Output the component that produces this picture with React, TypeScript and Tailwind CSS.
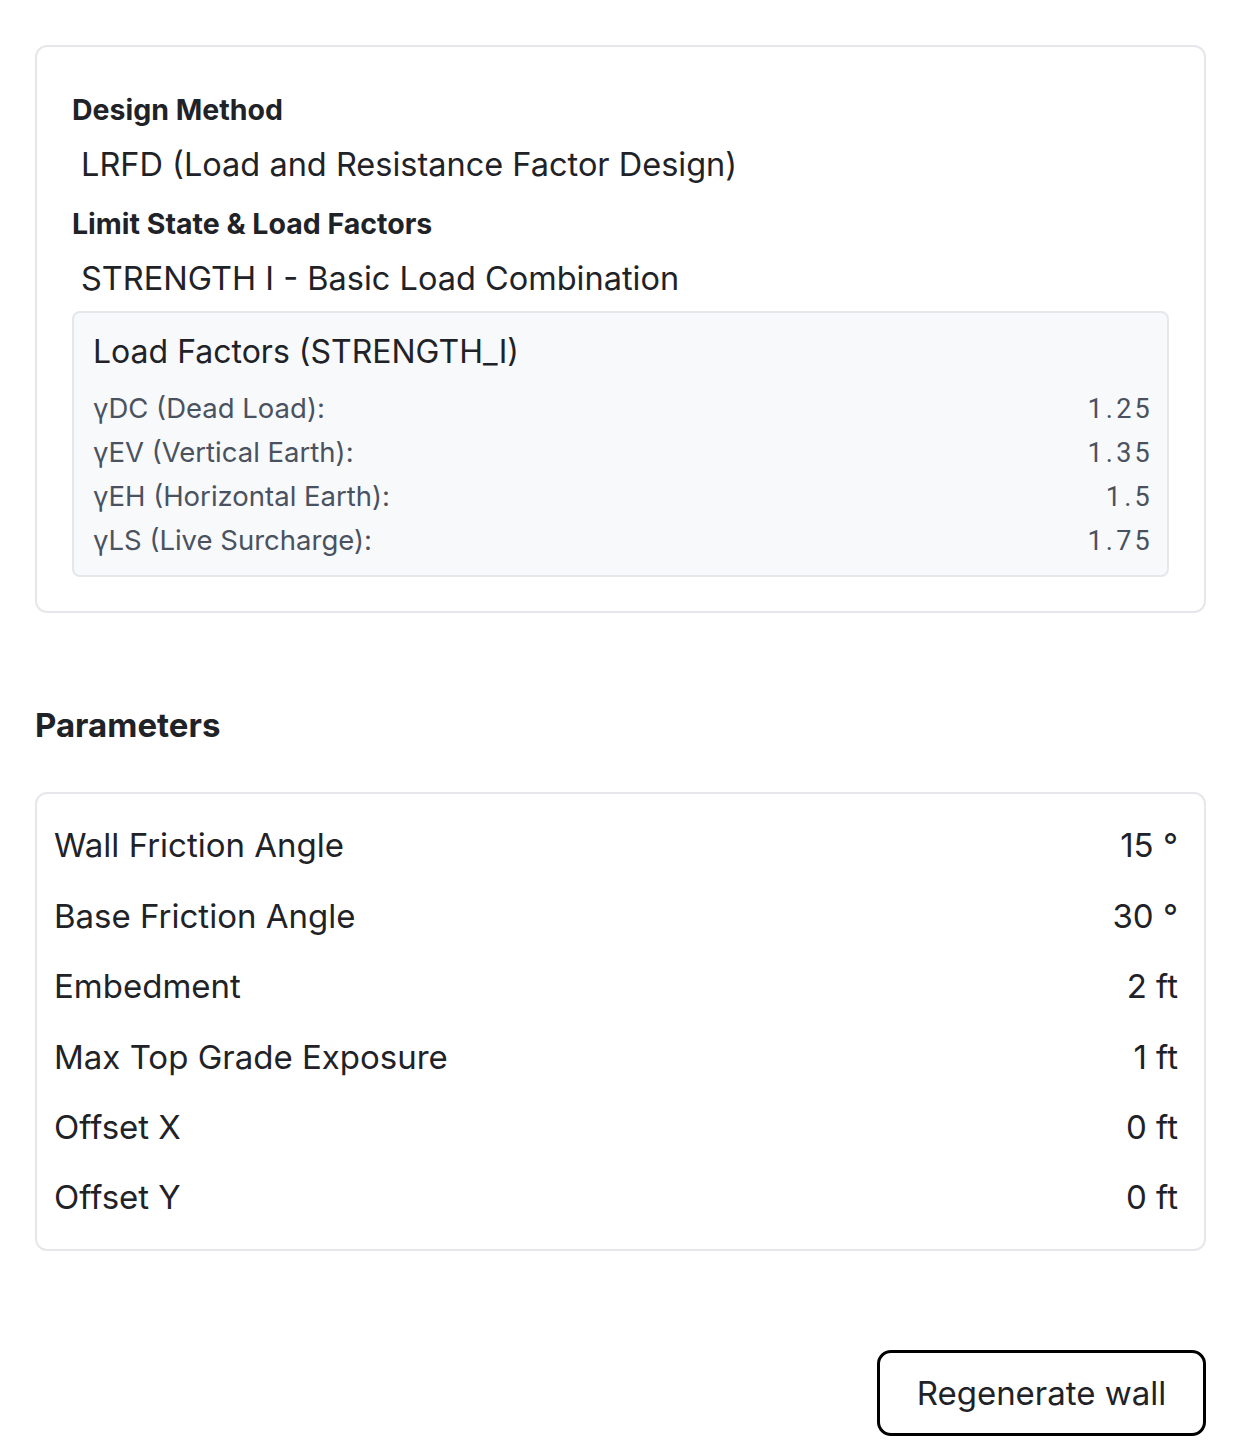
import React from "react";

// --- Static data ---
const loadFactors = [
  { label: "γDC (Dead Load):", value: "1.25" },
  { label: "γEV (Vertical Earth):", value: "1.35" },
  { label: "γEH (Horizontal Earth):", value: "1.5" },
  { label: "γLS (Live Surcharge):", value: "1.75" },
];

const params = [
  { label: "Wall Friction Angle", value: "15 °" },
  { label: "Base Friction Angle", value: "30 °" },
  { label: "Embedment", value: "2 ft" },
  { label: "Max Top Grade Exposure", value: "1 ft" },
  { label: "Offset X", value: "0 ft" },
  { label: "Offset Y", value: "0 ft" },
];

const bodyFont = "font-['Inter','Noto_Sans',sans-serif]";

export default function App() {
  return (
    <div className={`min-h-screen bg-white pl-[35px] pr-[28px] pt-[45px] pb-[10px] text-[#1f2328] ${bodyFont}`}>
      {/* --- Design method card --- */}
      <div className="rounded-[12px] border-2 border-[#e6e7ea] px-[35px] pt-[45px] pb-[34px]">
        <div className="text-[28.5px] font-bold leading-[36px]">Design Method</div>
        <div className="mt-[15px] pl-[9px] text-[32.5px] leading-[44px]">LRFD (Load and Resistance Factor Design)</div>
        <div className="mt-[19px] text-[28.5px] font-bold leading-[36px]">Limit State &amp; Load Factors</div>
        <div className="mt-[15px] pl-[9px] text-[32.5px] leading-[44px]">STRENGTH I - Basic Load Combination</div>

        <div className="mt-[10px] rounded-[8px] border-2 border-[#e6e7ea] bg-[#f8f9fb] px-[19px] pt-[18px] pb-[12px]">
          <div className="text-[32px] leading-[42px]">Load Factors (STRENGTH_I)</div>
          <div className="mt-[14px] flex flex-col">
            {loadFactors.map((f) => (
              <div key={f.label} className="flex h-[44px] items-center justify-between text-[27.5px] text-[#4a5260]">
                <span>{f.label}</span>
                <span className="-mr-[5px] font-['Roboto',sans-serif] text-[27px] tracking-[0.12em]">{f.value}</span>
              </div>
            ))}
          </div>
        </div>
      </div>

      {/* --- Parameters --- */}
      <div className="mt-[90px] text-[33px] font-bold leading-[44px]">Parameters</div>

      <div className="mt-[45px] rounded-[12px] border-2 border-[#e6e7ea] pl-[17px] pr-[26px] pt-[17px] pb-[16px]">
        {params.map((p) => (
          <div key={p.label} className="flex h-[70.4px] items-center justify-between text-[33px]">
            <span>{p.label}</span>
            <span>{p.value}</span>
          </div>
        ))}
      </div>

      <div className="mt-[99px] flex justify-end">
        <button className="h-[86px] w-[329px] rounded-[14px] border-[3.5px] border-black bg-white text-[33px] text-[#1f2328]">
          Regenerate wall
        </button>
      </div>
    </div>
  );
}
